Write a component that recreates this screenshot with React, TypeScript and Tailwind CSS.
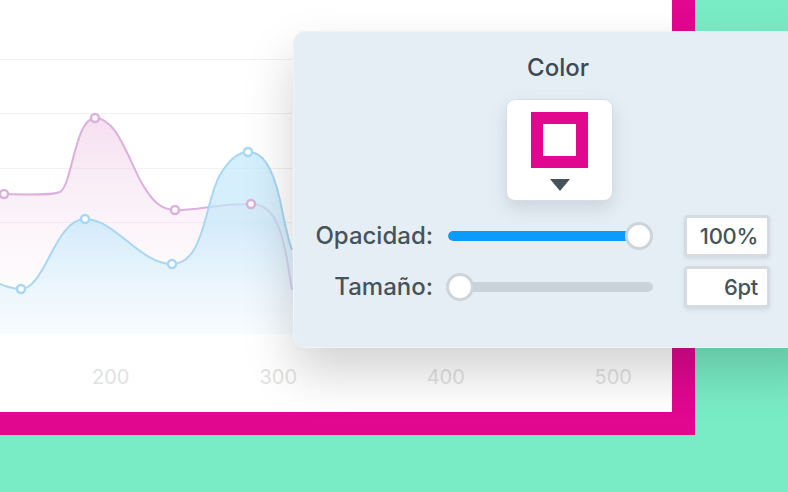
import React from 'react';

const FONT = { fontFamily: 'Inter, "Open Sans", "Liberation Sans", sans-serif' };

const pinkLine =
  'M -10,194 C 20,194 50,196 60,192 C 72,186 75,118 95,118 C 115,118 125,150 140,180 C 152,202 162,210 175,210 C 200,210 215,204 251,204 C 275,204 282,230 288,265 L 292,290';
const blueLine =
  'M -10,280 C 5,286 12,289 21,289 C 45,289 55,219 85,219 C 115,219 140,264 172,264 C 205,264 205,200 220,175 C 230,158 240,152 248,152 C 262,152 272,165 280,200 C 285,225 288,240 292,250';

const pinkPts = [
  [4, 194],
  [95, 118],
  [175, 210],
  [251, 204],
];
const bluePts = [
  [21, 289],
  [85, 219],
  [172, 264],
  [248, 152],
];

const Chart: React.FC = () => (
  <svg width="672" height="334" viewBox="0 0 672 334" className="block">
    <defs>
      <linearGradient id="pinkFill" x1="0" y1="0" x2="0" y2="1">
        <stop offset="0" stopColor="#eab9dc" stopOpacity="0.45" />
        <stop offset="1" stopColor="#f6e6f2" stopOpacity="0" />
      </linearGradient>
      <linearGradient id="blueFill" x1="0" y1="0.4" x2="0" y2="1">
        <stop offset="0" stopColor="#c4e8fb" stopOpacity="0.7" />
        <stop offset="1" stopColor="#e8f6fe" stopOpacity="0.35" />
      </linearGradient>
    </defs>
    {[59, 113, 168, 222].map(y => (
      <line key={y} x1="0" x2="672" y1={y + 0.5} y2={y + 0.5} stroke="#f1f1f1" strokeWidth="1" />
    ))}
    <path d={pinkLine + ' L 292,334 L -10,334 Z'} fill="url(#pinkFill)" />
    <path d={pinkLine} fill="none" stroke="#dbb0de" strokeWidth="2" />
    <path d={blueLine + ' L 300,334 L -10,334 Z'} fill="url(#blueFill)" />
    <path d={blueLine} fill="none" stroke="#a9d7f3" strokeWidth="2" />
    {pinkPts.map(([x, y]) => (
      <circle key={'p' + x} cx={x} cy={y} r="4" fill="#fff" stroke="#dbb0de" strokeWidth="2.5" />
    ))}
    {bluePts.map(([x, y]) => (
      <circle key={'b' + x} cx={x} cy={y} r="4" fill="#fff" stroke="#a9d7f3" strokeWidth="2.5" />
    ))}
  </svg>
);

const Slider: React.FC<{ value: number }> = ({ value }) => (
  <div className="relative w-[205px] h-[28px] flex items-center">
    <div className="w-full h-[10px] rounded-full bg-[#cbd3da] overflow-hidden">
      <div className="h-full bg-[#0a9bfb] rounded-full" style={{ width: `${value}px` }} />
    </div>
    <div
      className="absolute top-0 w-[28px] h-[28px] rounded-full bg-white border-[3px] border-[#cdd5db]"
      style={{ left: `${value - 14}px` }}
    />
  </div>
);

const Row: React.FC<{ label: string; value: string; pos: number }> = ({ label, value, pos }) => (
  <div className="flex items-center h-[42px]">
    <div className="w-[139px] text-right text-[24px] font-medium text-[#45535b] leading-none whitespace-nowrap">{label}</div>
    <div className="ml-[15px]">
      <Slider value={pos} />
    </div>
    <div className="ml-[31px] w-[86px] h-[42px] bg-white border-[3px] border-[#d4dce2] rounded-[4px] shadow-[0_2px_4px_rgba(60,80,100,0.12)] flex items-center justify-end pr-[9px] text-[22px] font-medium text-[#45535b] tracking-[-0.3px]">
      {value}
    </div>
  </div>
);

const ColorPanel: React.FC = () => (
  <div className="absolute left-[293px] top-[31px] w-[530px] h-[317px] rounded-[12px] bg-[#e6eef5] border border-[#eef3f7] shadow-[0_24px_50px_rgba(0,0,0,0.18)] flex flex-col">
    <div className="text-center text-[24px] font-medium text-[#3e4a51] mt-[21px] leading-[30px]">Color</div>
    <div className="self-start ml-[212px] mt-[16px] w-[107px] h-[102px] bg-white rounded-[9px] border border-[#d7dee3] shadow-[0_8px_18px_rgba(60,80,100,0.16)] flex flex-col items-center">
      <div className="mt-[12px] w-[57px] h-[56px] border-[12px] border-[#e2078f] bg-white" />
      <svg width="20" height="12" viewBox="0 0 20 12" className="mt-[11px]">
        <path d="M0 0 H20 L10 12 Z" fill="#45535b" />
      </svg>
    </div>
    <div className="mt-[14px] flex flex-col gap-[9px]">
      <Row label="Opacidad:" value="100%" pos={191} />
      <Row label="Tamaño:" value="6pt" pos={12} />
    </div>
  </div>
);

const App: React.FC = () => {
  return (
    <div className="relative w-[788px] h-[492px] overflow-hidden bg-[#79ecc5]" style={FONT}>
      <div className="w-[695px] h-[435px] bg-[#e1078f] flex items-start">
        <div className="w-[672px] h-[412px] bg-white flex flex-col">
          <Chart />
          <div className="flex pl-[27px] mt-[33px] text-[20px] text-[#e2e2e2] leading-none">
            {['200', '300', '400', '500'].map(l => (
              <div key={l} className="w-[167.5px] shrink-0 text-center">{l}</div>
            ))}
          </div>
        </div>
      </div>
      <ColorPanel />
    </div>
  );
};

export default App;
